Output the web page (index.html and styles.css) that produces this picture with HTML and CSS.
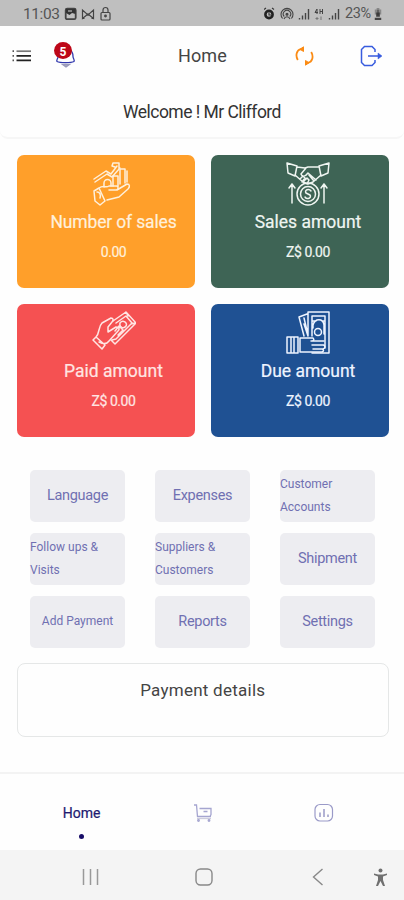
FILE: index.html
```html
<!DOCTYPE html>
<html lang="en">
<head>
<meta charset="utf-8">
<title>Home</title>
<link rel="stylesheet" href="styles.css">
</head>
<body>
<div class="statusbar">
  <span class="clock">11:03</span>
  <svg class="status-left" width="50" height="16" viewBox="0 0 50 16" fill="none" stroke="#444" stroke-width="1.2">
    <rect x="1.7" y="2.7" width="10" height="10.5" rx="1.5" stroke-width="1.8"/><path d="M2 3h9.500v5L8 7l-2.500 2L2 7z" fill="#333" stroke="none"/><path d="M4 5h4" stroke="#bbb"/>
    <path d="M18.500 12.500V4l5.500 5 5.500-5v8.500L24 8zM18.500 12.500h2M27.500 12.500h2"/>
    <rect x="37" y="6.500" width="9" height="7.500" rx="1"/><path d="M39 6V4a2.500 2.500 0 0 1 5 0v2"/><circle cx="41.500" cy="10" r=".8" fill="#444"/>
  </svg>
  <svg class="status-right" width="78" height="16" viewBox="0 0 78 16" fill="none" stroke="#444" stroke-width="1.1">
    <circle cx="5" cy="8.500" r="3.600" stroke="#222" stroke-width="2.600"/><path d="M5 6.500v2.500h2M0 3.500l2-1.500M10 3.500L8 2" stroke="#333"/>
    <path d="M18.600 12.500a6 6 0 1 1 8.800 0M20.300 10.500a3.700 3.700 0 1 1 5.400 0M20 13c1-3 5-3 6 0"/><circle cx="23" cy="8.300" r="1" fill="#444"/>
    <path d="M35.500 13.500v-1.500M38.500 13.500v-4M41.500 13.500V7M44.500 13.500V3M65.500 13.500v-1.500M68.500 13.500v-4M71.500 13.500V7M74.500 13.500V3" stroke-width="1.400"/>
    <path d="M53 3l-2 3.500h3M53 3v5M56 3v5M56 5.500h3M58.500 3v5" stroke-width="1"/><path d="M53 14v-3M51.500 12.500h3M57 10.500v3.500" stroke="#777" stroke-width="1"/>
  </svg>
  <span class="battery-level">23%</span>
  <svg class="battery" width="8" height="12" viewBox="0 0 8 13"><path d="M2.500 0h3v1.500h2V7h-7V1.500h2z" fill="#888"/><path d="M.5 10.500h7V13h-7zM2 5h4v4.500H2z" fill="#444"/><path d="M4 2v6" stroke="#333"/></svg>
</div>
<header class="topbar">
  <svg class="menu-icon" width="20" height="12" viewBox="0 0 20 12" stroke-width="1.700"><path d="M4.500 1.200H19" stroke="#777"/><path d="M4.500 5.800H19M4.500 10.300H19" stroke="#222"/><path d="M.5 1.200h1.500M.5 5.800h1.500M.5 10.300h1.500" stroke="#555"/></svg>
  <div class="bell">
    <svg width="24" height="28" viewBox="0 0 24 28" fill="none" stroke="#3037ad" stroke-width="1.300"><path d="M4 15c0 2-2 2.500-1 4.500 3 1.500 14 1.500 17 0 1-2-1-2.500-1-5 0-3-1-6-4-7"/><path d="M8.500 22.500h7L12 25z" fill="#aab" stroke="#99b"/></svg>
    <span class="badge">5</span>
  </div>
  <h1 class="title">Home</h1>
  <svg class="sync" width="19" height="22" viewBox="0 0 19 22" fill="none" stroke="#fb8b14" stroke-width="1.800"><path d="M2.800 15C.2 10.500 1.500 5 6 4.200l3 .1M16.200 7c2.600 4.500 1.300 10-3.200 10.800l-3-.1"/><path d="M10.500 15.500v4.700l3.500-2.400zM8.500 1.800v4.700L5 4.200z" fill="#fb8b14" stroke-width="1"/></svg>
  <svg class="logout" width="23" height="22" viewBox="0 0 23 22" fill="none" stroke="#385cde" stroke-width="1.500"><path d="M15 7V4.500L12 1.500H4.500L1.500 4.500v13l3 3H12l3-3V15M8 11h12.500"/><path d="M18 8l4 3-4 3z" fill="#385cde" stroke-width=".5"/></svg>
</header>
<div class="welcome"><span>Welcome ! Mr Clifford</span></div>
<main>
  <section class="stats">
    <article class="stat orange">
      <svg class="stat-icon" viewBox="0 0 44 44"><g><path d="M2 17l12-8 5 3L25 4M3 20l12-8 5 3 8-9M21 1h6v6M21 1l-1 3 3 1"/><path d="M12 25v-4a3 3 0 0 1 7 0v3M21 24V14h5v10M28 22V7h5v14M35 20V9"/><path d="M2 29l5-3 6 13-5 4-5-4zM7 26c4-3 7 0 10-2h8c2 1 1 4-1 4h-7 8l10-6c3 0 3 3 1 5l-9 8-12 3M5 30c3 0 4 3 3 6"/></g></svg>
      <h2 class="sales-count">Number of sales</h2><p>0.00</p>
    </article>
    <article class="stat green">
      <svg class="stat-icon" viewBox="0 0 44 44"><g><path d="M1 1l10 3-2 10-7-3zM43 1L33 4l2 10 7-3zM11 5l8 1 3-1 11 0M9 13l8 7 5 2 5-2 8-7M20 6l-5 6c1 3 4 3 7-1l8 7M14 17l3-3 2 2-3 4M18 19l3-3 2 2-2 4M23 13l5 6"/><circle cx="22" cy="32" r="11"/><circle cx="22" cy="32" r="7.500"/><path d="M25 29c-2-3-7-1-5 2l4 2c2 3-3 5-5 2"/><path d="M6 41V22M3 26l3-4 3 4M38 41V22M35 26l3-4 3 4"/></g></svg>
      <h2>Sales amount</h2><p>Z$ 0.00</p>
    </article>
    <article class="stat red">
      <svg class="stat-icon" viewBox="0 0 44 44"><g><path d="M1 29l3-3 9 8-3 4zM4 26c4-4 2-10 6-14l9-5c2 0 3 2 1 4l-4 5v5l8-5c3 0 4 2 2 4l-9 10c-2 3-6 3-10 1"/><path d="M21 10L34 1l10 11-21 21-4-4M24 12l10-7 6 7-16 16M23 20l4-5 4 4-5 5M28 12c3-4 8 0 6 3s-7 2-6-3M34 1l2 4M39 13l4-1M20 29l4-1"/></g></svg>
      <h2>Paid amount</h2><p>Z$ 0.00</p>
    </article>
    <article class="stat blue">
      <svg class="stat-icon" viewBox="0 0 44 44"><g><path d="M22 25V1h21v41H26M26 25V5h13v32M18 25L13 6l8-3M18 7l4 17M22 25L18 13M27 10h3M36 10h2M27 17v-3c2-7 10-7 11 0v9"/><circle cx="32" cy="21" r="3.500"/><path d="M1 26h11v16H1zM5 27v15M8 27v15M14 27h13c2 2 0 3-2 3h13M14 41h22c2-1 2-3 0-3h-9 10c3-1 2-4 0-4H26h12M14 27v14"/></g></svg>
      <h2>Due amount</h2><p>Z$ 0.00</p>
    </article>
  </section>
  <nav class="tiles">
    <a class="tile">Language</a><a class="tile">Expenses</a><a class="tile small">Customer<br>Accounts</a>
    <a class="tile small">Follow ups &amp;<br>Visits</a><a class="tile small">Suppliers &amp;<br>Customers</a><a class="tile">Shipment</a>
    <a class="tile small single">Add Payment</a><a class="tile">Reports</a><a class="tile">Settings</a>
  </nav>
  <section class="payment"><h2>Payment details</h2></section>
</main>
<nav class="tabs">
  <div class="tab active"><span>Home</span><i></i></div>
  <div class="tab"><svg width="20" height="20" viewBox="0 0 20 20" fill="none" stroke="#a5a5d0" stroke-width="1.300"><path d="M1 2h2.500l1 11.500H18M6.500 5.500H18v6l-1 2M10.500 8.500h4"/><path d="M4 15.500h14" stroke="#ccd"/><circle cx="5.500" cy="17.500" r=".8"/><circle cx="16" cy="17.500" r=".8"/></svg></div>
  <div class="tab"><svg width="20" height="20" viewBox="0 0 20 20" fill="none" stroke="#9a9ac8" stroke-width="1.200"><rect x="1" y="1.500" width="17.500" height="16.500" rx="5"/><path d="M6 9.500V14M10 6v8M14 11.500V14" stroke-width="1.500"/></svg></div>
</nav>
<footer class="system">
  <svg width="18" height="18" viewBox="0 0 18 18" stroke="#999" stroke-width="1.500"><path d="M1.500 1v16M8.500 1v16M15.500 1v16"/></svg>
  <svg width="18" height="18" viewBox="0 0 18 18" fill="none" stroke="#888" stroke-width="1.400"><rect x="1" y="1" width="16" height="16" rx="4.500"/></svg>
  <svg width="12" height="18" viewBox="0 0 12 18" fill="none" stroke="#888" stroke-width="1.400"><path d="M10.500 1L1.500 9l9 8"/></svg>
  <svg width="15" height="19" viewBox="0 0 15 19" fill="#707070"><circle cx="7.500" cy="2.500" r="2"/><path d="M1 5.500l4 1h5l4-1v1.500l-4 1.500V12l2 6h-2L7.500 13 5 18H3l2-6V8.500L1 7z"/></svg>
</footer>
</body>
</html>
```
FILE: styles.css
```css
* { box-sizing: border-box; }
body { margin: 0; width: 404px; height: 900px; display: flex; flex-direction: column; background: #fefefe; color: #444; font-family: Roboto, "Noto Sans", sans-serif; overflow: hidden; }
h1, h2, p { margin: 0; font-weight: 400; }
svg { display: block; flex: none; }
.statusbar { height: 26px; background: #bfbfbf; display: flex; align-items: center; padding: 1px 20px 0 23px; color: #555; flex: none; }
.clock { font-size: 15.5px; width: 41px; letter-spacing: -.4px; }
.status-right { margin-left: 150px; }
.battery-level { font-size: 14.5px; margin-left: 3px; width: 28px; letter-spacing: -.4px; }
.battery { margin-left: 1px; }
.topbar { height: 60px; flex: none; display: grid; grid-template-columns: 42px 124px 117px 65px 1fr; align-items: center; padding-left: 12px; }
.bell { position: relative; width: 24px; height: 28px; }
.badge { position: absolute; left: 0; top: 0; width: 18px; height: 17px; border-radius: 50%; background: #bd0718; color: #fff; font: 700 12px/21px Roboto, sans-serif; text-align: center; }
.title { font-size: 18px; letter-spacing: .1px; line-height: 24px; }
.welcome { height: 53px; flex: none; border-bottom: 2px solid #f6f6f6; border-radius: 0 0 8px 8px; text-align: center; font-size: 17.5px; line-height: 53px; letter-spacing: -.53px; color: #333; }
main { flex: 1; padding: 16px 15px 0 16.5px; }
.stats { display: grid; grid-template-columns: 178px 178px; gap: 16px 16.5px; }
.stat { height: 133px; border-radius: 7px; padding: 7px 0 0 16px; color: #fff; display: flex; flex-direction: column; align-items: center; }
.orange { background: #ff9f2a; color: #fff0dc; }
.green { background: #3e6455; color: #eff5f1; }
.red { background: #f55152; color: #ffe5e3; }
.blue { background: #1f5193; color: #eef4ff; }
.stat-icon { width: 44px; height: 44px; fill: none; stroke: currentColor; stroke-width: 1.5; stroke-linejoin: round; stroke-linecap: round; }
.stat h2 { font-size: 17.5px; line-height: 24px; margin-top: 4px; -webkit-text-stroke: .2px; }
.stat .sales-count { letter-spacing: -.15px; }
.stat p { font-size: 14px; line-height: 20px; margin-top: 8px; letter-spacing: -.45px; -webkit-text-stroke: .2px; }
.tiles { display: grid; grid-template-columns: repeat(3, 95px); gap: 11px 30px; margin: 32.5px 0 0 13.5px; }
.tile { height: 52px; border-radius: 5px; background: #ededf1; color: #7070b2; display: flex; align-items: center; justify-content: center; font-size: 14.5px; letter-spacing: -.3px; }
.small { justify-content: flex-start; font-size: 12px; line-height: 23px; letter-spacing: 0; }
.single { justify-content: center; }
.payment { height: 74px; margin-top: 15.5px; border: 1.500px solid #e5e7e7; border-radius: 8px; text-align: center; }
.payment h2 { font-size: 17px; line-height: 24px; margin-top: 14px; letter-spacing: .25px; }
.tabs { height: 78px; flex: none; border-top: 2px solid #f3f3f3; display: grid; grid-template-columns: 121px 121px 121px; padding-left: 21px; }
.tab { display: flex; flex-direction: column; align-items: center; padding-top: 29px; }
.tab span { font-size: 14px; line-height: 20px; color: #211a70; -webkit-text-stroke: .2px; }
.tab i { width: 5px; height: 5px; border-radius: 50%; background: #180d68; margin-top: 10.5px; }
.system { height: 50px; flex: none; background: #f4f4f4; display: grid; grid-template-columns: 113px 117px 61px 1fr; align-items: center; padding: 4px 0 0 82px; }
```
